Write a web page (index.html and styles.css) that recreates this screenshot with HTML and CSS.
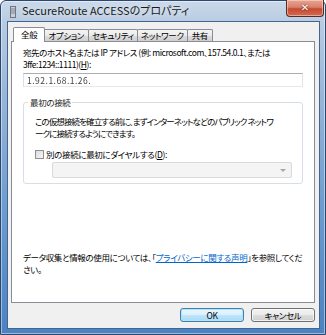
FILE: index.html
```html
<!DOCTYPE html>
<html lang="ja">
  <head>
    <meta charset="UTF-8" />
    <title>SecureRoute ACCESSのプロパティ</title>
    <link rel="stylesheet" href="styles.css">
  </head>
  <body>
    <div class="window">
      <div class="titlebar">
        <svg class="app-icon" width="6" height="12" viewBox="0 0 6 12">
          <rect x="0.5" y="0.5" width="5" height="11" fill="#c9ced6" stroke="#6f7783"/>
          <line x1="1" y1="3" x2="5" y2="3" stroke="#7d8794"/>
          <line x1="1" y1="5" x2="5" y2="5" stroke="#7d8794"/>
          <line x1="1" y1="7" x2="5" y2="7" stroke="#7d8794"/>
        </svg>
        <span class="title">SecureRoute ACCESSのプロパティ</span>
        <div class="close">✕</div>
      </div>

      <div class="client">
        <div class="tabs">
          <div class="tab active">全般</div>
          <div class="tab">オプション</div>
          <div class="tab">セキュリティ</div>
          <div class="tab">ネットワーク</div>
          <div class="tab">共有</div>
        </div>

        <div class="panel">
          <p class="host-label">宛先のホスト名または IP アドレス (例: microsoft.com、157.54.0.1、または<br>3ffe:1234::1111)(<u>H</u>):</p>
          <div class="textbox"><span class="masked">1.92.1.68.1.26.</span></div>

          <fieldset class="group">
            <legend>最初の接続</legend>
            <p class="group-text">この仮想接続を確立する前に、まずインターネットなどのパブリック ネットワ<br>ークに接続するようにできます。</p>
            <label class="check"><span class="box"></span>別の接続に最初にダイヤルする(<u>D</u>):</label>
            <div class="combo"><span class="arrow"></span></div>
          </fieldset>

          <p class="privacy">データ収集と情報の使用については、「<a href="#">プライバシーに関する声明</a>」を参照してくだ<br>さい。</p>
        </div>

        <div class="buttons">
          <div class="btn default">OK</div>
          <div class="btn">キャンセル</div>
        </div>
      </div>
    </div>
  </body>
</html>
```

FILE: styles.css
```css
      * {
        box-sizing: border-box;
      }
      body {
        margin: 0;
        width: 326px;
        height: 335px;
        overflow: hidden;
        font-family: "Noto Sans CJK JP", "Noto Sans", sans-serif;
        font-size: 8.5px;
        line-height: 12px;
        letter-spacing: -0.35px;
        color: #000000;
        font-feature-settings: "palt";
      }
      .window {
        height: 335px;
        display: flex;
        flex-direction: column;
        padding: 0 5px 5px 6px;
        border: 1px solid #2b4870;
        border-radius: 6px 6px 0 0;
        background: linear-gradient(180deg, #cbd9e9 0, #b8cce2 20px, #9ab7d9 90px, #6f9dd0 200px, #4a82c2 100%);
        box-shadow: inset 0 0 0 1px rgba(255, 255, 255, 0.45);
      }
      .titlebar {
        height: 20px;
        display: flex;
        align-items: flex-start;
      }
      .app-icon {
        margin: 5px 0 0 3px;
      }
      .title {
        margin: 3px 0 0 6px;
        font-size: 11px;
        line-height: 13px;
        letter-spacing: 0;
        color: #1a1a1a;
        text-shadow: 0 0 6px rgba(255, 255, 255, 0.9);
      }
      .close {
        margin: -1px -4px 0 auto;
        width: 38px;
        height: 17px;
        border: 1px solid #5a2a24;
        border-top: none;
        border-radius: 0 0 4px 4px;
        background: linear-gradient(180deg, #e8a593 0, #d9816c 45%, #c54a33 55%, #d06a4f 100%);
        box-shadow: inset 0 0 0 1px rgba(255, 230, 220, 0.5);
        color: #ffffff;
        font-family: "DejaVu Sans", sans-serif;
        font-size: 10px;
        font-weight: bold;
        line-height: 16px;
        letter-spacing: 0;
        text-align: center;
        text-shadow: 0 0 2px #5a1a10;
      }
      .client {
        flex: 1;
        display: flex;
        flex-direction: column;
        padding: 5px 4px 6px 3px;
        border: 1px solid #45658f;
        background: #f0f0f0;
      }
      .tabs {
        display: flex;
        align-items: flex-end;
        height: 14px;
        padding-left: 2px;
        position: relative;
        z-index: 1;
      }
      .tab {
        height: 12px;
        padding: 0 3px;
        margin-right: -1px;
        border: 1px solid #898c95;
        border-bottom: none;
        border-radius: 2px 2px 0 0;
        background: linear-gradient(180deg, #f4f4f4 0, #ebebeb 50%, #dddddd 51%, #cfcfcf 100%);
        line-height: 10px;
        white-space: nowrap;
      }
      .tab:nth-child(2),
      .tab:last-child {
        padding: 0 4px;
      }
      .tab.active {
        height: 15px;
        margin-bottom: -1px;
        margin-right: -2px;
        padding: 1px 7px 0;
        background: #ffffff;
        position: relative;
        z-index: 2;
      }
      .panel {
        height: 262px;
        display: flex;
        flex-direction: column;
        padding: 4px 11px 0 11px;
        border: 1px solid #898c95;
        background: #ffffff;
      }
      .host-label {
        margin: 0;
        white-space: nowrap;
        letter-spacing: -0.45px;
      }
      .textbox {
        margin-top: 3px;
        height: 14px;
        padding-left: 3px;
        border: 1px solid;
        border-color: #abadb3 #e2e3ea #e3e9ef #dbdfe6;
        line-height: 12px;
      }
      .masked {
        color: #444444;
        filter: blur(0.6px);
        letter-spacing: 0.5px;
      }
      .group {
        margin: 9px 0 0;
        padding: 0 10px 5px 11px;
        min-width: 0;
        border: 1px solid #d5dfe5;
        border-radius: 3px;
      }
      .group legend {
        margin-left: -7px;
        padding: 0 2px;
        line-height: 12px;
        color: #1e1e1e;
      }
      .group-text {
        margin: 7px 0 0;
        white-space: nowrap;
        letter-spacing: -0.9px;
      }
      .check {
        display: flex;
        align-items: center;
        margin-top: 9px;
        height: 12px;
        white-space: nowrap;
      }
      .box {
        width: 9px;
        height: 9px;
        margin-right: 2px;
        border: 1px solid #8f8f8f;
        background: linear-gradient(135deg, #dcdcdc 0, #f6f6f6 100%);
      }
      .combo {
        display: flex;
        justify-content: flex-end;
        align-items: center;
        margin: 2px 0 0 17px;
        height: 16px;
        padding-right: 5px;
        border: 1px solid #d9d9d9;
        border-radius: 2px;
        background: #f4f4f4;
      }
      .arrow {
        width: 0;
        height: 0;
        border-left: 3px solid transparent;
        border-right: 3px solid transparent;
        border-top: 3px solid #a8a8a8;
      }
      .privacy {
        margin: auto 0 27px;
        white-space: nowrap;
      }
      .privacy a {
        color: #0066cc;
      }
      .buttons {
        display: flex;
        justify-content: flex-end;
        gap: 7px;
        margin-top: 5px;
      }
      .btn {
        width: 64px;
        height: 14px;
        border: 1px solid #707070;
        border-radius: 3px;
        background: linear-gradient(180deg, #f2f2f2 0, #ebebeb 50%, #dddddd 51%, #cfcfcf 100%);
        box-shadow: inset 0 0 0 1px rgba(255, 255, 255, 0.7);
        line-height: 12px;
        text-align: center;
      }
      .btn.default {
        border-color: #3c7fb1;
        background: linear-gradient(180deg, #eaf6fd 0, #d9f0fc 50%, #bee6fd 51%, #a7d9f5 100%);
        box-shadow: inset 0 0 0 1px #b7e2f7;
      }
```
